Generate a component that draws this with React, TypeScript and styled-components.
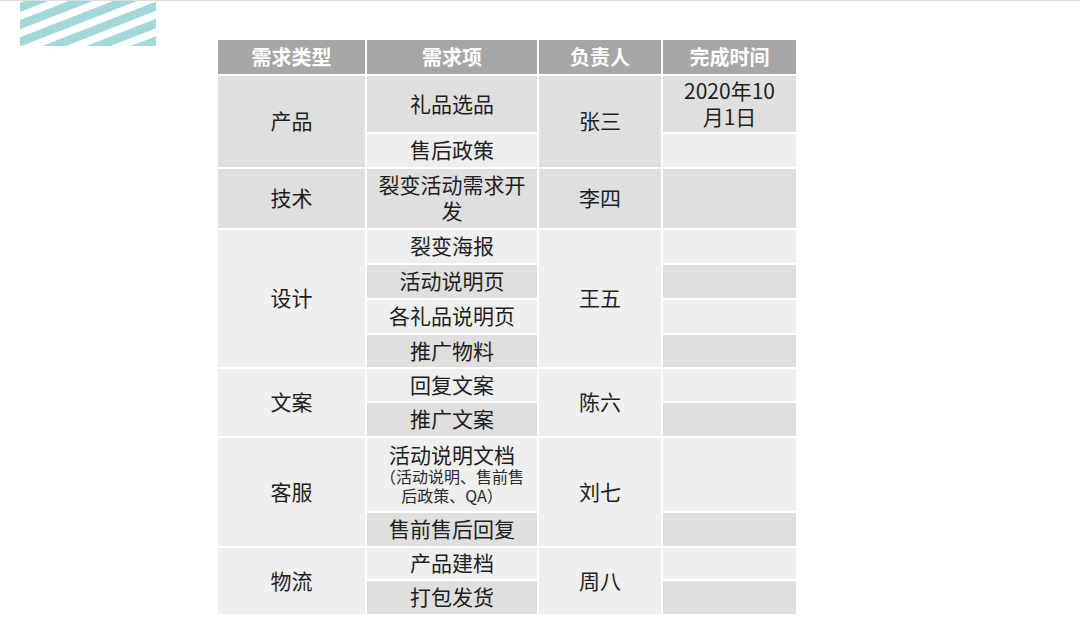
import React from 'react';
import styled, { createGlobalStyle } from 'styled-components';

const GlobalStyle = createGlobalStyle`
  html, body {
    margin: 0;
    padding: 0;
    background: #ffffff;
  }
  body {
    font-family: "Noto Sans CJK SC", "Noto Sans", "Liberation Sans", sans-serif;
  }
`;

const Page = styled.div`
  display: flex;
  align-items: flex-start;
  min-height: 100vh;
  border-top: 1px solid #dedede;
  box-sizing: border-box;
`;

const Decor = styled.div`
  flex-shrink: 0;
  width: 136px;
  height: 45px;
  margin-left: 20px;
  svg {
    display: block;
  }
`;

const TableWrap = styled.div`
  margin-left: 62px;
  margin-top: 39px;
`;

const Grid = styled.div<{ $rows: number[] }>`
  display: grid;
  grid-template-columns: 147px 170px 122px 133px;
  grid-template-rows: 34px ${p => p.$rows.map(h => `${h}px`).join(' ')};
  gap: 2px;
  background: #ffffff;
`;

const HeadCell = styled.div<{ $col: number }>`
  grid-column: ${p => p.$col};
  grid-row: 1;
  display: flex;
  align-items: center;
  justify-content: center;
  padding-bottom: 2px;
  background: #a6a6a6;
  color: #ffffff;
  font-size: 20px;
  font-weight: 700;
`;

const Cell = styled.div<{ $col: number; $row: number; $span: number; $dark: boolean }>`
  grid-column: ${p => p.$col};
  grid-row: ${p => p.$row} / span ${p => p.$span};
  display: flex;
  flex-direction: column;
  align-items: center;
  justify-content: center;
  padding: 0 8px 3px;
  background: ${p => (p.$dark ? '#dfdfdf' : '#efefef')};
  color: #1e1e1e;
  font-size: 21px;
  line-height: 26px;
  text-align: center;
`;

const Note = styled.span`
  display: block;
  font-size: 16px;
  line-height: 19px;
  color: #2a2a2a;
`;

type Group = {
  type: string;
  owner: string;
  items: React.ReactNode[];
  dates?: React.ReactNode[];
};

const groups: Group[] = [
  {
    type: '产品',
    owner: '张三',
    items: ['礼品选品', '售后政策'],
    dates: [
      <>
        2020年10
        <br />
        月1日
      </>,
    ],
  },
  { type: '技术', owner: '李四', items: ['裂变活动需求开发'] },
  { type: '设计', owner: '王五', items: ['裂变海报', '活动说明页', '各礼品说明页', '推广物料'] },
  { type: '文案', owner: '陈六', items: ['回复文案', '推广文案'] },
  {
    type: '客服',
    owner: '刘七',
    items: [
      <>
        活动说明文档
        <Note>
          （活动说明、售前售
          <br />
          后政策、QA）
        </Note>
      </>,
      '售前售后回复',
    ],
  },
  { type: '物流', owner: '周八', items: ['产品建档', '打包发货'] },
];

const headers = ['需求类型', '需求项', '负责人', '完成时间'];
const rowHeights = [56, 33, 59, 33, 33, 33, 32, 32, 33, 73, 33, 31, 33];

const Stripes: React.FC = () => (
  <svg width="136" height="45" viewBox="0 0 136 45">
    <defs>
      <clipPath id="stripeClip">
        <rect x="0" y="0" width="136" height="45" />
      </clipPath>
    </defs>
    <g clipPath="url(#stripeClip)" stroke="#a3d8d8" strokeWidth="8.7">
      {[-10.95, 6.35, 23.65, 40.95, 58.25, 75.55, 92.85, 110.15].map(c => (
        <line key={c} x1={-5} y1={c + 1.95} x2={141} y2={c - 55} />
      ))}
    </g>
  </svg>
);

const App: React.FC = () => {
  let row = 2;
  const cells: React.ReactNode[] = [];

  groups.forEach((g, gi) => {
    const start = row;
    const span = g.items.length;
    const firstShade = (start - 2) % 2 === 0;
    cells.push(
      <Cell key={`t${gi}`} $col={1} $row={start} $span={span} $dark={firstShade}>
        {g.type}
      </Cell>,
    );
    cells.push(
      <Cell key={`o${gi}`} $col={3} $row={start} $span={span} $dark={firstShade}>
        {g.owner}
      </Cell>,
    );
    g.items.forEach((item, ii) => {
      const r = start + ii;
      const dark = (r - 2) % 2 === 0;
      cells.push(
        <Cell key={`i${gi}-${ii}`} $col={2} $row={r} $span={1} $dark={dark}>
          <span>{item}</span>
        </Cell>,
      );
      cells.push(
        <Cell key={`d${gi}-${ii}`} $col={4} $row={r} $span={1} $dark={dark}>
          {g.dates?.[ii] ?? ''}
        </Cell>,
      );
    });
    row += span;
  });

  return (
    <>
      <GlobalStyle />
      <Page>
        <Decor>
          <Stripes />
        </Decor>
        <TableWrap>
          <Grid $rows={rowHeights}>
            {headers.map((h, i) => (
              <HeadCell key={h} $col={i + 1}>
                {h}
              </HeadCell>
            ))}
            {cells}
          </Grid>
        </TableWrap>
      </Page>
    </>
  );
};

export default App;
